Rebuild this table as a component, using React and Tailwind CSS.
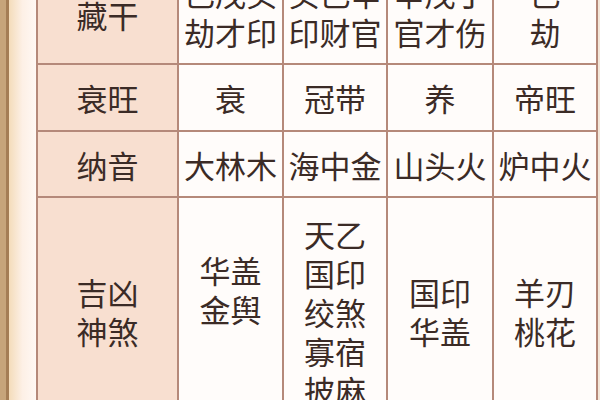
import React from 'react'

const ROWS = [
  { label: ['藏干'], cells: [['己戊癸', '劫才印'], ['癸己辛', '印财官'], ['辛戊丁', '官才伤'], ['己', '劫']] },
  { label: ['衰旺'], cells: [['衰'], ['冠带'], ['养'], ['帝旺']] },
  { label: ['纳音'], cells: [['大林木'], ['海中金'], ['山头火'], ['炉中火']] },
  {
    label: ['吉凶', '神煞'],
    cells: [['华盖', '金舆'], ['天乙', '国印', '绞煞', '寡宿', '披麻'], ['国印', '华盖'], ['羊刃', '桃花']],
  },
]

function Lines({ lines }) {
  return (
    <div className="flex flex-col items-center">
      {lines.map((l, i) => (
        <span key={i} className="whitespace-nowrap">{l}</span>
      ))}
    </div>
  )
}

export default function App() {
  return (
    <div
      className="w-[600px] h-[400px] overflow-hidden flex bg-white text-[#3b2b26]"
      style={{ fontFamily: '"Noto Sans CJK SC", "Noto Sans", sans-serif' }}
    >
      {/* scroll edge on the left */}
      <div className="w-[36px] h-full flex shrink-0">
        <div className="w-[6px] bg-[#c6a47b]" />
        <div className="w-[3px] bg-[#a47d56]" />
        <div className="flex-1 bg-gradient-to-r from-[#f4dcba] via-[#fdf0e6] to-[#fff8f4]" />
      </div>

      <div className="-mt-[42px] shrink-0">
        <div className="grid grid-cols-[139px_103px_102px_104px_102px] grid-rows-[103px_65px_64px_226px] gap-[2px] p-[2px] bg-[#b5897a] text-[31px] leading-[39px]">
          {ROWS.map((row, r) => (
            <React.Fragment key={r}>
              <div className={'bg-[#f8dfd0] flex items-center justify-center ' + (r === 0 ? 'pt-[6px]' : '')}>
                <Lines lines={row.label} />
              </div>
              {row.cells.map((c, i) => (
                <div
                  key={i}
                  className={
                    'bg-[#fffcfa] flex items-center justify-center ' +
                    (r === 3 && i === 0 ? 'pb-[44px]' : '')
                  }
                >
                  <Lines lines={c} />
                </div>
              ))}
            </React.Fragment>
          ))}
        </div>
      </div>

      <div className="flex-1 bg-[#f3e6d8]" />
    </div>
  )
}
